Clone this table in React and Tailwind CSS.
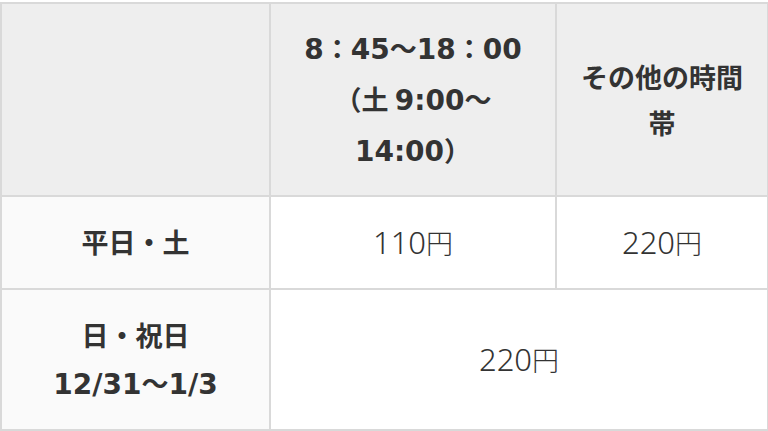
import React from "react";

const font = { fontFamily: '"Noto Sans CJK JP", "Noto Sans", sans-serif' };

// numerals in the reference are wider/taller than the CJK glyphs around them
function B({ children }) {
  return <span className="font-['DejaVu_Sans','Noto_Sans_CJK_JP',sans-serif] text-[28px]">{children}</span>;
}

function P({ children }) {
  return <span className="font-['Noto_Sans','Noto_Sans_CJK_JP',sans-serif] text-[31px] font-light">{children}</span>;
}

const cell = "border-2 border-[#d9d9d9] text-center";

export default function App() {
  return (
    <div className="w-[768px] h-[431px] bg-white pt-[2px]" style={font}>
      <table className="w-[767px] table-fixed border-collapse border-2 border-[#d9d9d9] text-[#333333] text-[27px]">
        <colgroup>
          <col className="w-[269px]" />
          <col className="w-[286px]" />
          <col className="w-[212px]" />
        </colgroup>
        <thead>
          <tr className="h-[193px] bg-[#eeeeee]">
            <th className={cell}></th>
            <th className={`${cell} px-2 font-bold leading-[49px] whitespace-nowrap`}>
              <B>8</B>：<B>45</B>〜<B>18</B>：<B>00</B>
              <br />
              （土 <B>9:00</B>〜
              <br />
              <B>14:00</B>）
            </th>
            <th className={`${cell} px-2 font-bold leading-[46px]`}>
              その他の時間
              <br />
              帯
            </th>
          </tr>
        </thead>
        <tbody>
          <tr className="h-[93px]">
            <th className={`${cell} bg-[#fafafa] font-bold`}>平日・土</th>
            <td className={`${cell} font-light`}>
              <P>110</P>円
            </td>
            <td className={`${cell} font-light`}>
              <P>220</P>円
            </td>
          </tr>
          <tr className="h-[141px]">
            <th className={`${cell} bg-[#fafafa] font-bold leading-[48px]`}>
              日・祝日
              <br />
              <B>12/31</B>〜<B>1/3</B>
            </th>
            <td colSpan={2} className={`${cell} font-light`}>
              <P>220</P>円
            </td>
          </tr>
        </tbody>
      </table>
    </div>
  );
}
